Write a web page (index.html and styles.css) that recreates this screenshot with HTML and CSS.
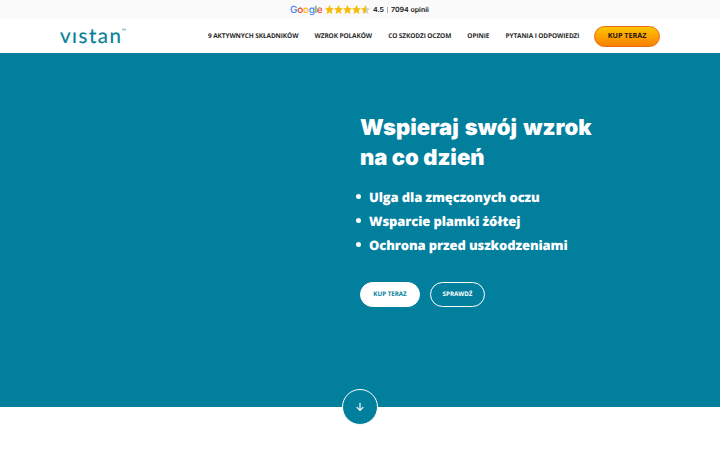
FILE: index.html
```html
<!DOCTYPE html>
<html lang="pl">
<head>
<meta charset="utf-8">
<title>Vistan</title>
<link rel="stylesheet" href="styles.css">
</head>
<body>
<div class="reviews">
  <span class="google"><span class="blue">G</span><span class="red">o</span><span class="yellow">o</span><span class="blue">g</span><span class="green">l</span><span class="red">e</span></span>
  <svg class="stars" viewBox="0 0 45 9">
    <defs>
      <path id="star" d="M4.5 0 5.8 3.1 9 3.4 6.6 5.6 7.3 8.9 4.5 7.2 1.7 8.9 2.4 5.6 0 3.4 3.2 3.1Z"/>
      <linearGradient id="half"><stop offset=".55" stop-color="#f6bb06"/><stop offset=".55" stop-color="#ccc"/></linearGradient>
    </defs>
    <g fill="#f6bb06"><use href="#star"/><use href="#star" x="9"/><use href="#star" x="18"/><use href="#star" x="27"/></g>
    <use href="#star" x="36" fill="url(#half)"/>
  </svg>
  <span class="score">4.5</span><span class="bar"></span><span class="count">7094 opinii</span>
</div>
<header class="header">
  <a class="logo"><span class="wordmark">vıstan</span><span class="tm">™</span></a>
  <nav class="nav">
    <a>9 AKTYWNYCH SKŁADNIKÓW</a>
    <a>WZROK POLAKÓW</a>
    <a>CO SZKODZI OCZOM</a>
    <a>OPINIE</a>
    <a>PYTANIA I ODPOWIEDZI</a>
  </nav>
  <a class="buy">KUP TERAZ</a>
</header>
<main class="hero">
  <div class="content">
    <h1><span class="line-one">Wspieraj swój wzrok</span><br><span class="line-two">na co dzień</span></h1>
    <ul>
      <li>Ulga dla zmęczonych oczu</li>
      <li>Wsparcie plamki żółtej</li>
      <li>Ochrona przed uszkodzeniami</li>
    </ul>
    <div class="actions"><a class="btn solid">KUP TERAZ</a><a class="btn outline">SPRAWDŹ</a></div>
  </div>
  <a class="down"><svg viewBox="0 0 10 10"><path d="M5 1V8.4M1.7 5.2 5 8.5 8.3 5.2"/></svg></a>
</main>
</body>
</html>
```
FILE: styles.css
```css
* { box-sizing: border-box; }
body { margin: 0; height: 450px; overflow: hidden; background: #fff; font-family: "Open Sans", sans-serif; text-rendering: geometricPrecision; }
.reviews { height: 19px; background: #fafafa; display: flex; align-items: center; padding-left: 290px; font: 600 7px/19px Inter, sans-serif; color: #111; white-space: nowrap; }
.google { width: 34.5px; font: 500 10px/18px Inter, sans-serif; letter-spacing: -.3px; }
.blue { color: #4285f4; }
.red { color: #ea4335; }
.yellow { color: #fbbc05; }
.green { color: #34a853; }
.stars { width: 45px; height: 9px; margin-top: -1px; }
.score { margin-left: 3.5px; width: 11px; }
.bar { width: 1px; height: 6px; background: #aaa; margin: 0 3px; }
.header { height: 34px; display: flex; align-items: center; padding: 0 60px; color: #2b2b2b; }
.logo { width: 148px; flex: none; display: flex; color: #087f96; font-family: Lato, sans-serif; height: 24px; }
.wordmark { font-size: 20.5px; line-height: 24px; letter-spacing: 1.5px; -webkit-text-stroke: .2px #087f96; }
.tm { font-size: 6px; line-height: 15px; margin-left: -1px; }
.nav { display: flex; gap: 16.2px; font-size: 6.5px; line-height: 10px; font-weight: 700; letter-spacing: -.1px; white-space: nowrap; padding-bottom: 1px; }
.buy { margin-left: auto; flex: none; width: 66px; height: 21px; border: 1px solid #e96a0c; border-radius: 11px; background: linear-gradient(#fdc500, #f98000); font-size: 7.2px; font-weight: 700; line-height: 19px; text-align: center; color: #28130a; }
.hero { position: relative; height: 354px; background: #037f9e; color: #fff; padding: 60px 0 0 360px; }
h1 { margin: 0; font: 900 22px/30px Inter, sans-serif; white-space: nowrap; }
.line-one { word-spacing: 1.8px; }
ul { list-style: none; margin: 12px 0 0; padding: 0; }
li { display: flex; align-items: center; height: 24px; line-height: 22px; padding-bottom: 1px; margin-left: -4px; font-size: 13px; font-weight: 800; letter-spacing: -.11px; white-space: nowrap; }
li::before { content: ""; width: 5px; height: 5px; border-radius: 50%; background: #fff; margin-right: 8px; }
.actions { display: flex; gap: 10px; margin-top: 25px; }
.btn { height: 25px; border-radius: 13px; border: 1.5px solid #fff; font-size: 6.2px; font-weight: 700; line-height: 22px; text-align: center; }
.solid { width: 60px; background: #fff; color: #037f9e; }
.outline { width: 55px; }
.down { position: absolute; left: 342px; bottom: -18px; width: 36px; height: 36px; border: 1.5px solid #fff; border-radius: 50%; background: #037f9e; display: flex; align-items: center; justify-content: center; }
.down svg { width: 10px; height: 10px; fill: none; stroke: #fff; stroke-width: 1.2; }
```
